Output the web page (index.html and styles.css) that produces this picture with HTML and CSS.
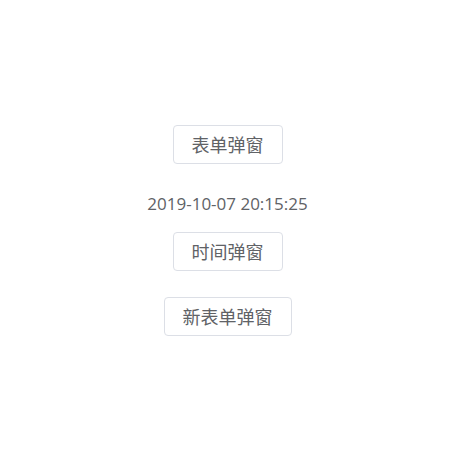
FILE: index.html
```html
<!DOCTYPE html>
<html lang="zh">
<head>
<meta charset="utf-8">
<link rel="stylesheet" href="styles.css">
</head>
<body>
<div class="page">
  <button class="btn">表单弹窗</button>
  <div class="time">2019-10-07 20:15:25</div>
  <button class="btn">时间弹窗</button>
  <button class="btn btn-last">新表单弹窗</button>
</div>
</body>
</html>
```
FILE: styles.css
```css
html, body {
  margin: 0;
  padding: 0;
  background: #fff;
}
.page {
  height: 460px;
  display: flex;
  flex-direction: column;
  align-items: center;
  padding: 125px 5px 0 0;
  font-family: "Open Sans", "Noto Sans CJK SC", sans-serif;
  color: #606266;
  box-sizing: border-box;
}
.btn {
  font-family: "Noto Sans CJK SC", sans-serif;
  font-size: 18px;
  line-height: 17px;
  color: #606266;
  background: #fff;
  border: 1px solid #dcdfe6;
  border-radius: 4px;
  padding: 10px 18px;
  cursor: pointer;
}
.time {
  font-size: 17px;
  line-height: 22px;
  margin: 29px 0 17px;
}
.btn-last {
  margin-top: 26px;
}
```
